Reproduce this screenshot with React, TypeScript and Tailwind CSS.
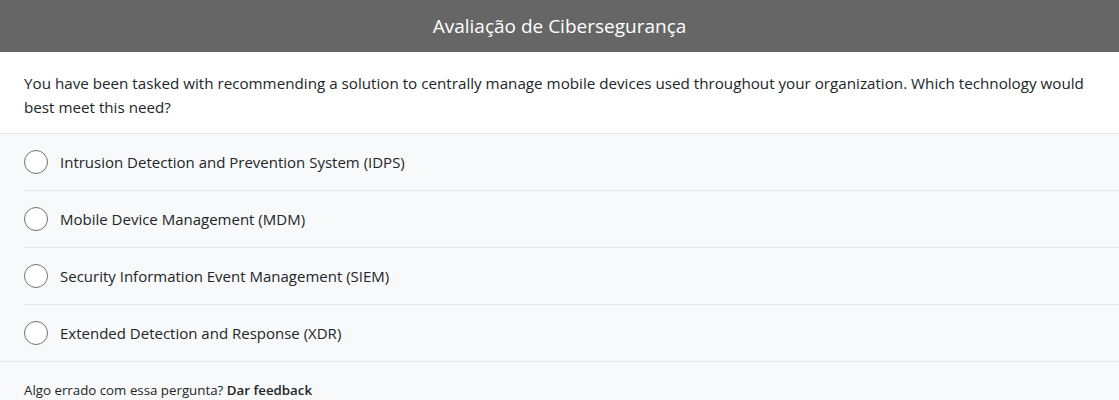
const options = [
  'Intrusion Detection and Prevention System (IDPS)',
  'Mobile Device Management (MDM)',
  'Security Information Event Management (SIEM)',
  'Extended Detection and Response (XDR)',
];

export default function App() {
  return (
    <div className="min-h-screen bg-[#f8f9fa] text-[#212529] font-['Open_Sans','Noto_Sans',sans-serif]">
      <div className="h-[52px] bg-[#666666] flex items-center justify-center">
        <h5 className="text-white text-[19px] leading-none">Avaliação de Cibersegurança</h5>
      </div>

      <div className="bg-white px-6 pt-[19px] pb-[14px] text-[15.2px] leading-6 border-b border-[#e5e7eb]">
        You have been tasked with recommending a solution to centrally manage mobile devices used throughout your
        organization. Which technology would best meet this need?
      </div>

      <ul className="border-b border-[#e5e7eb]">
        {options.map((opt, i) => (
          <li key={i} className="pl-6">
            <label
              className={`h-[56px] flex items-center gap-3 cursor-pointer text-[15px] ${
                i < options.length - 1 ? 'h-[57px] border-b border-[#e5e7eb]' : ''
              }`}
            >
              <span className="w-6 h-6 rounded-full border border-[#707070] bg-white shrink-0" />
              <span>{opt}</span>
            </label>
          </li>
        ))}
      </ul>

      <div className="px-6 pt-[19px] text-[13.3px]">
        Algo errado com essa pergunta? <span className="font-semibold">Dar feedback</span>
      </div>
    </div>
  );
}
